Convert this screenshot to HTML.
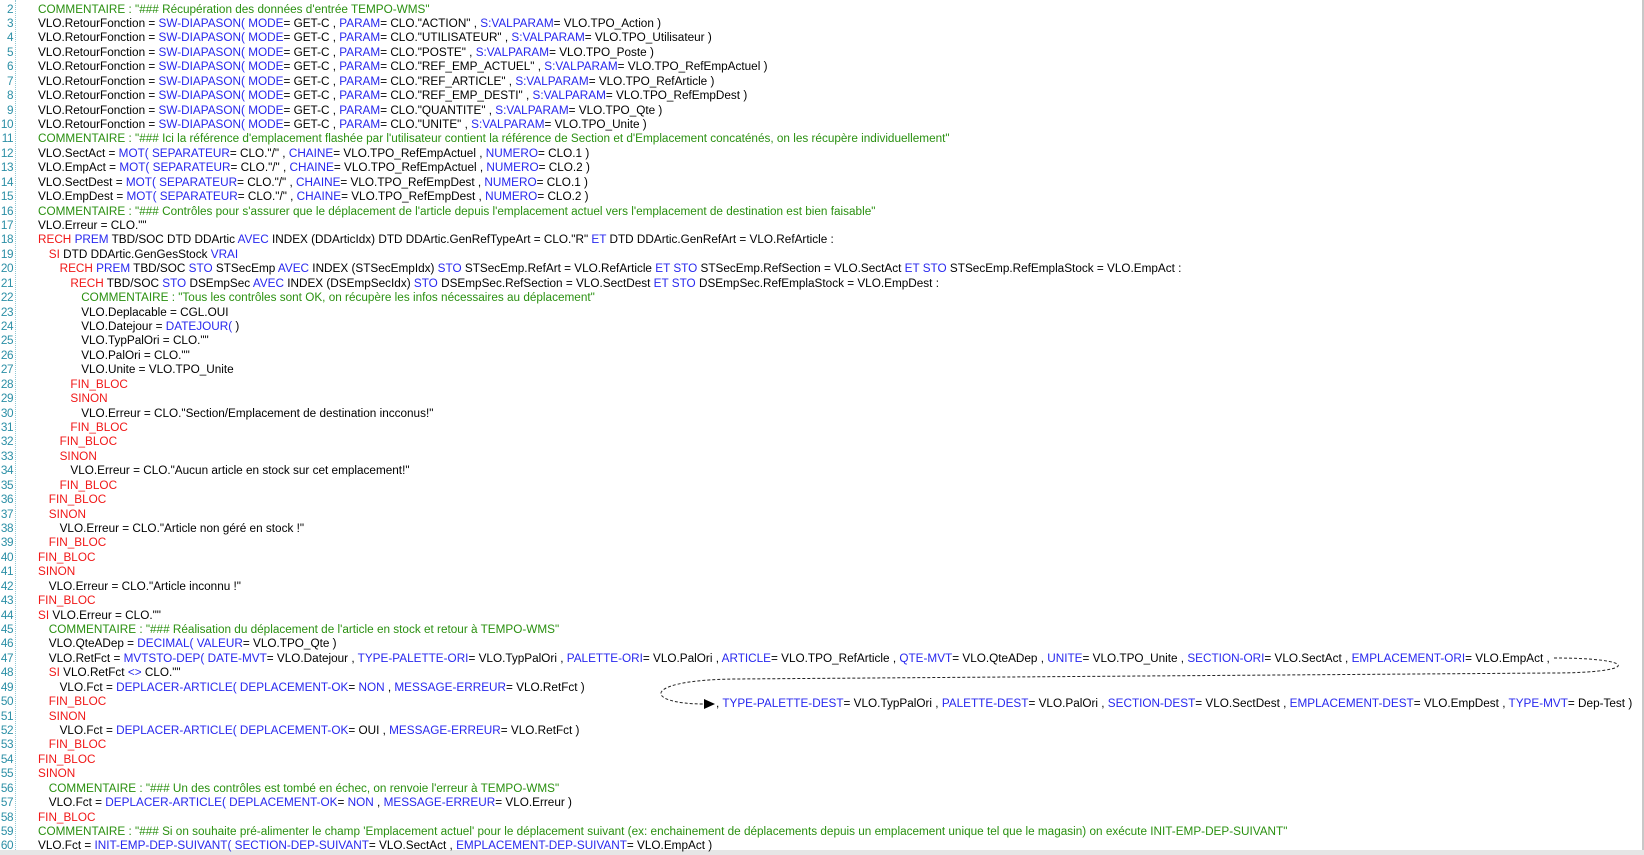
<!DOCTYPE html>
<html><head><meta charset="utf-8"><style>
html,body{margin:0;padding:0;background:#fff;width:1644px;height:855px;overflow:hidden;position:relative}
body{font-family:"Liberation Sans",Arial,sans-serif;font-size:11.75px;color:#000}
.l{position:absolute;left:0;height:14px;line-height:14px;white-space:pre}
.n{position:absolute;left:0;width:13px;text-align:right;color:#2b8fa6;letter-spacing:-0.5px}
.t{position:absolute}
.k{color:#f01818}.b{color:#2828ee}.c{color:#2a9010}
#sep{position:absolute;left:15px;top:0;height:850px;border-left:1px dotted #8fc7d4}
#rb{position:absolute;right:0;top:0;width:2px;height:850px;background:#c8c8c8}
#bb{position:absolute;left:0;top:850px;width:1644px;height:5px;background:#e6e6e6}
</style></head><body>
<div id="sep"></div><div id="rb"></div><div id="bb"></div>
<div id="code"></div>
<svg width="1644" height="855" style="position:absolute;left:0;top:0">
<path d="M1554,658 C1640,658 1640,673 1552,673 L735,679 C640,680 644,704 704,704" fill="none" stroke="#222" stroke-width="1" stroke-dasharray="3,2"/>
<polygon points="704,699 715,704 704,709" fill="#000"/>
</svg>
<script>
var L=[
[2,0,'<span class="c">COMMENTAIRE : "### Récupération des données d\'entrée TEMPO-WMS"</span>']];
var p=[["ACTION","TPO_Action"],["UTILISATEUR","TPO_Utilisateur"],["POSTE","TPO_Poste"],["REF_EMP_ACTUEL","TPO_RefEmpActuel"],["REF_ARTICLE","TPO_RefArticle"],["REF_EMP_DESTI","TPO_RefEmpDest"],["QUANTITE","TPO_Qte"],["UNITE","TPO_Unite"]];
p.forEach(function(x,i){L.push([3+i,0,'VLO.RetourFonction = <span class="b">SW-DIAPASON(</span> <span class="b">MODE</span>= GET-C , <span class="b">PARAM</span>= CLO."'+x[0]+'" , <span class="b">S:VALPARAM</span>= VLO.'+x[1]+' )']);});
function mot(v,c,n){return 'VLO.'+v+' = <span class="b">MOT(</span> <span class="b">SEPARATEUR</span>= CLO."/" , <span class="b">CHAINE</span>= VLO.'+c+' , <span class="b">NUMERO</span>= CLO.'+n+' )';}
var B=function(s){return '<span class="b">'+s+'</span>'},K=function(s){return '<span class="k">'+s+'</span>'},C=function(s){return '<span class="c">'+s+'</span>'};
L=L.concat([
[11,0,C('COMMENTAIRE : "### Ici la référence d\'emplacement flashée par l\'utilisateur contient la référence de Section et d\'Emplacement concaténés, on les récupère individuellement"')],
[12,0,mot("SectAct","TPO_RefEmpActuel",1)],[13,0,mot("EmpAct","TPO_RefEmpActuel",2)],
[14,0,mot("SectDest","TPO_RefEmpDest",1)],[15,0,mot("EmpDest","TPO_RefEmpDest",2)],
[16,0,C('COMMENTAIRE : "### Contrôles pour s\'assurer que le déplacement de l\'article depuis l\'emplacement actuel vers l\'emplacement de destination est bien faisable"')],
[17,0,'VLO.Erreur = CLO.""'],
[18,0,K('RECH')+' '+B('PREM')+' TBD/SOC DTD DDArtic '+B('AVEC')+' INDEX (DDArticIdx) DTD DDArtic.GenRefTypeArt = CLO."R" '+B('ET')+' DTD DDArtic.GenRefArt = VLO.RefArticle :'],
[19,1,K('SI')+' DTD DDArtic.GenGesStock '+B('VRAI')],
[20,2,K('RECH')+' '+B('PREM')+' TBD/SOC '+B('STO')+' STSecEmp '+B('AVEC')+' INDEX (STSecEmpIdx) '+B('STO')+' STSecEmp.RefArt = VLO.RefArticle '+B('ET')+' '+B('STO')+' STSecEmp.RefSection = VLO.SectAct '+B('ET')+' '+B('STO')+' STSecEmp.RefEmplaStock = VLO.EmpAct :'],
[21,3,K('RECH')+' TBD/SOC '+B('STO')+' DSEmpSec '+B('AVEC')+' INDEX (DSEmpSecIdx) '+B('STO')+' DSEmpSec.RefSection = VLO.SectDest '+B('ET')+' '+B('STO')+' DSEmpSec.RefEmplaStock = VLO.EmpDest :'],
[22,4,C('COMMENTAIRE : "Tous les contrôles sont OK, on récupère les infos nécessaires au déplacement"')],
[23,4,'VLO.Deplacable = CGL.OUI'],[24,4,'VLO.Datejour = '+B('DATEJOUR(')+' )'],
[25,4,'VLO.TypPalOri = CLO.""'],[26,4,'VLO.PalOri = CLO.""'],[27,4,'VLO.Unite = VLO.TPO_Unite'],
[28,3,K('FIN_BLOC')],[29,3,K('SINON')],[30,4,'VLO.Erreur = CLO."Section/Emplacement de destination incconus!"'],
[31,3,K('FIN_BLOC')],[32,2,K('FIN_BLOC')],[33,2,K('SINON')],
[34,3,'VLO.Erreur = CLO."Aucun article en stock sur cet emplacement!"'],
[35,2,K('FIN_BLOC')],[36,1,K('FIN_BLOC')],[37,1,K('SINON')],
[38,2,'VLO.Erreur = CLO."Article non géré en stock !"'],
[39,1,K('FIN_BLOC')],[40,0,K('FIN_BLOC')],[41,0,K('SINON')],
[42,1,'VLO.Erreur = CLO."Article inconnu !"'],[43,0,K('FIN_BLOC')],
[44,0,K('SI')+' VLO.Erreur = CLO.""'],
[45,1,C('COMMENTAIRE : "### Réalisation du déplacement de l\'article en stock et retour à TEMPO-WMS"')],
[46,1,'VLO.QteADep = '+B('DECIMAL(')+' '+B('VALEUR')+'= VLO.TPO_Qte )'],
[47,1,'VLO.RetFct = '+B('MVTSTO-DEP(')+' '+B('DATE-MVT')+'= VLO.Datejour , '+B('TYPE-PALETTE-ORI')+'= VLO.TypPalOri , '+B('PALETTE-ORI')+'= VLO.PalOri , '+B('ARTICLE')+'= VLO.TPO_RefArticle , '+B('QTE-MVT')+'= VLO.QteADep , '+B('UNITE')+'= VLO.TPO_Unite , '+B('SECTION-ORI')+'= VLO.SectAct , '+B('EMPLACEMENT-ORI')+'= VLO.EmpAct ,'],
[48,1,K('SI')+' VLO.RetFct '+B('&lt;&gt;')+' CLO.""'],
[49,2,'VLO.Fct = '+B('DEPLACER-ARTICLE(')+' '+B('DEPLACEMENT-OK')+'= '+B('NON')+' , '+B('MESSAGE-ERREUR')+'= VLO.RetFct )'],
[50,1,K('FIN_BLOC')],[51,1,K('SINON')],
[52,2,'VLO.Fct = '+B('DEPLACER-ARTICLE(')+' '+B('DEPLACEMENT-OK')+'= OUI , '+B('MESSAGE-ERREUR')+'= VLO.RetFct )'],
[53,1,K('FIN_BLOC')],[54,0,K('FIN_BLOC')],[55,0,K('SINON')],
[56,1,C('COMMENTAIRE : "### Un des contrôles est tombé en échec, on renvoie l\'erreur à TEMPO-WMS"')],
[57,1,'VLO.Fct = '+B('DEPLACER-ARTICLE(')+' '+B('DEPLACEMENT-OK')+'= '+B('NON')+' , '+B('MESSAGE-ERREUR')+'= VLO.Erreur )'],
[58,0,K('FIN_BLOC')],
[59,0,C('COMMENTAIRE : "### Si on souhaite pré-alimenter le champ \'Emplacement actuel\' pour le déplacement suivant (ex: enchainement de déplacements depuis un emplacement unique tel que le magasin) on exécute INIT-EMP-DEP-SUIVANT"')],
[60,0,'VLO.Fct = '+B('INIT-EMP-DEP-SUIVANT(')+' '+B('SECTION-DEP-SUIVANT')+'= VLO.SectAct , '+B('EMPLACEMENT-DEP-SUIVANT')+'= VLO.EmpAct )']
]);
var h='',LH=14.43;
L.forEach(function(x){var top=2.5+(x[0]-2)*LH;
h+='<div class="l" style="top:'+top.toFixed(2)+'px"><span class="n">'+x[0]+'</span><span class="t" style="left:'+(38+x[1]*10.8).toFixed(1)+'px">'+x[2]+'</span></div>';});
var t50=2.5+(50-2)*LH+2;
h+='<div class="l" style="top:'+t50.toFixed(2)+'px"><span class="t" style="left:716px">, '+B('TYPE-PALETTE-DEST')+'= VLO.TypPalOri , '+B('PALETTE-DEST')+'= VLO.PalOri , '+B('SECTION-DEST')+'= VLO.SectDest , '+B('EMPLACEMENT-DEST')+'= VLO.EmpDest , '+B('TYPE-MVT')+'= Dep-Test )</span></div>';
document.getElementById('code').innerHTML=h;
</script>
</body></html>
